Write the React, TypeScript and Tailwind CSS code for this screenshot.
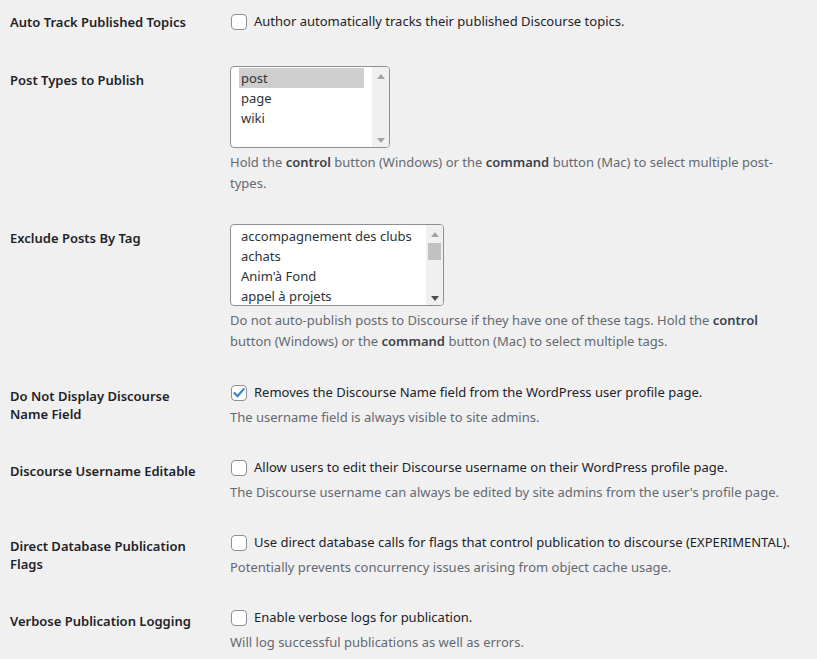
import type { ReactNode } from 'react'

const font = { fontFamily: '"Noto Sans", "Open Sans", sans-serif' }

function Checkbox({ checked = false }: { checked?: boolean }) {
  return (
    <span className="relative mr-[7px] inline-flex h-[16px] w-[16px] shrink-0 items-center justify-center rounded-[4px] border border-[#8c8f94] bg-white">
      {checked && (
        <svg width="14" height="14" viewBox="0 0 14 14" fill="none">
          <path d="M2.6 7.2l2.9 3L11.6 3.2" stroke="#3582c4" strokeWidth="2.2" strokeLinecap="square" />
        </svg>
      )}
    </span>
  )
}

function Arrow({ up, dark }: { up?: boolean; dark?: boolean }) {
  return (
    <svg width="8" height="5" viewBox="0 0 8 5">
      <path d={up ? 'M0 5L4 0l4 5z' : 'M0 0h8L4 5z'} fill={dark ? '#505050' : '#a3a3a3'} />
    </svg>
  )
}

function ListBox({ options, width, selected, thumb }: { options: string[]; width: string; selected?: number; thumb?: boolean }) {
  return (
    <div className={`flex h-[82px] overflow-hidden rounded-[4px] border border-[#8c8f94] bg-white ${width}`}>
      <div className="flex-1 pl-[8px] pr-[8px] pt-px">
        {options.map((o, i) => (
          <div
            key={o}
            className={`h-[20px] whitespace-nowrap pl-[2px] text-[13px] leading-[20px] text-[#2c3338] ${i === selected ? 'bg-[#cecece]' : ''}`}
          >
            {o}
          </div>
        ))}
      </div>
      <div className="flex w-[17px] flex-col items-center bg-[#f0f0f0] pb-[4px] pt-[7px]">
        <Arrow up />
        {thumb ? <div className="mt-[6px] h-[17px] w-[13px] bg-[#c1c1c1]" /> : null}
        <div className="flex-1" />
        <Arrow dark={thumb} />
      </div>
    </div>
  )
}

function Row({ label, children, first, list }: { label: ReactNode; children: ReactNode; first?: boolean; list?: boolean }) {
  const pad = first ? 'pb-[19px] pt-[12px]' : list ? 'pb-[15px] pt-[15px]' : 'pb-[14px] pt-[16px]'
  return (
    <div className="flex">
      <div
        className={`w-[220px] shrink-0 pl-[10px] pr-[10px] text-[13px] font-semibold leading-[18px] text-[#1d2327] ${first ? 'pt-[13px]' : 'pt-[20px]'}`}
      >
        {label}
      </div>
      <div className={`min-w-0 flex-1 pr-[10px] pl-[10px] ${pad}`}>{children}</div>
    </div>
  )
}

function CheckLine({ checked, text }: { checked?: boolean; text: string }) {
  return (
    <div className="flex h-[20px] items-center pl-px text-[13px] text-[#1d2327]">
      <Checkbox checked={checked} />
      <span className="whitespace-nowrap">{text}</span>
    </div>
  )
}

function Desc({ children }: { children: ReactNode }) {
  return <p className="mt-[4px] text-[13px] leading-[21px] text-[#646970]">{children}</p>
}

export default function App() {
  return (
    <div className="min-h-screen bg-[#f0f0f1]" style={font}>
      <Row first label="Auto Track Published Topics">
        <CheckLine text="Author automatically tracks their published Discourse topics." />
      </Row>
      <Row list label="Post Types to Publish">
        <ListBox options={['post', 'page', 'wiki']} width="w-[160px]" selected={0} />
        <Desc>
          <span className="block whitespace-nowrap">
            Hold the <b className="font-semibold text-[#3c434a]">control</b> button (Windows) or the{' '}
            <b className="font-semibold text-[#3c434a]">command</b> button (Mac) to select multiple post-
          </span>
          <span className="block">types.</span>
        </Desc>
      </Row>
      <Row list label="Exclude Posts By Tag">
        <ListBox
          options={['accompagnement des clubs', 'achats', "Anim'à Fond", 'appel à projets']}
          width="w-[214px]"
          thumb
        />
        <Desc>
          <span className="block whitespace-nowrap">
            Do not auto-publish posts to Discourse if they have one of these tags. Hold the{' '}
            <b className="font-semibold text-[#3c434a]">control</b>
          </span>
          <span className="block whitespace-nowrap">
            button (Windows) or the <b className="font-semibold text-[#3c434a]">command</b> button (Mac) to select multiple tags.
          </span>
        </Desc>
      </Row>
      <Row label={<>Do Not Display Discourse<br />Name Field</>}>
        <CheckLine checked text="Removes the Discourse Name field from the WordPress user profile page." />
        <Desc>The username field is always visible to site admins.</Desc>
      </Row>
      <Row label="Discourse Username Editable">
        <CheckLine text="Allow users to edit their Discourse username on their WordPress profile page." />
        <Desc>The Discourse username can always be edited by site admins from the user's profile page.</Desc>
      </Row>
      <Row label={<>Direct Database Publication<br />Flags</>}>
        <CheckLine text="Use direct database calls for flags that control publication to discourse (EXPERIMENTAL)." />
        <Desc>Potentially prevents concurrency issues arising from object cache usage.</Desc>
      </Row>
      <Row label="Verbose Publication Logging">
        <CheckLine text="Enable verbose logs for publication." />
        <Desc>Will log successful publications as well as errors.</Desc>
      </Row>
    </div>
  )
}
